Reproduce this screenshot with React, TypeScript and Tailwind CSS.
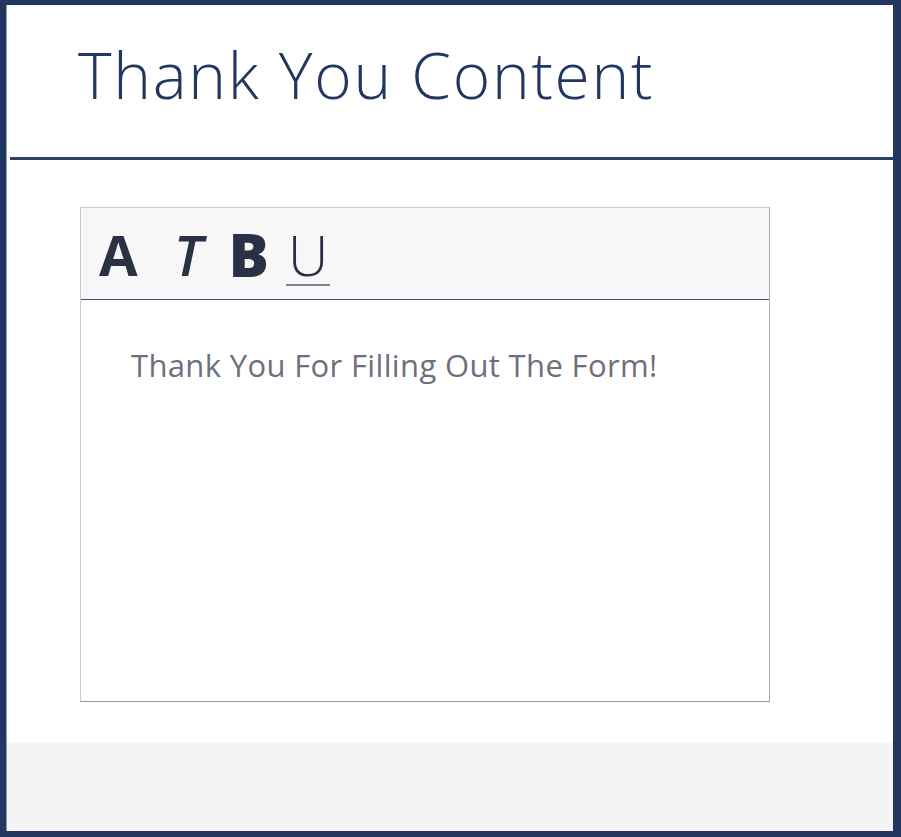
export default function App() {
  return (
    <div className="w-[901px] h-[837px] bg-[#21375f] pl-[6px] pt-[5px] pr-[8px] pb-[6px]" style={{ fontFamily: '"Open Sans", "Noto Sans", sans-serif' }}>
      <div className="w-full h-full bg-white flex flex-col border-l border-[#8f9bb3]">
        <div className="h-[152px] flex items-start pl-[71px] pt-[26px]">
          <h1 className="text-[64px] leading-[88px] font-light text-[#21375f] tracking-[1.7px]">Thank You Content</h1>
        </div>
        <div className="ml-[3px] h-[3px] bg-[#2a3f66]" />
        <div className="flex-1 pl-[73px] pt-[47px]">
          <div className="w-[690px] h-[495px] border border-t-[#c5cad8] border-l-[#c5cad8] border-r-[#a6aec0] border-b-[#8e97ab] flex flex-col">
            <div className="h-[92px] bg-[#f7f7f7] border-b border-[#3d4f75] flex items-center pl-[18px] text-[#2a3145]">
              <span className="text-[56px] leading-none font-bold">A</span>
              <span className="ml-[36px] text-[56px] leading-none font-semibold italic">T</span>
              <span className="ml-[26px] text-[60px] leading-none font-extrabold">B</span>
              <span className="ml-[17px] text-[56px] leading-none font-light border-b-2 border-[#7b8090] px-[2px] pb-[2px] mt-[4px]">U</span>
            </div>
            <div className="flex-1 bg-white pl-[50px] pt-[45px]">
              <p className="text-[31px] leading-[40px] text-[#6d707c] tracking-[0.35px]">Thank You For Filling Out The Form!</p>
            </div>
          </div>
        </div>
        <div className="h-[88px] bg-[#f4f4f4]" />
      </div>
    </div>
  );
}
